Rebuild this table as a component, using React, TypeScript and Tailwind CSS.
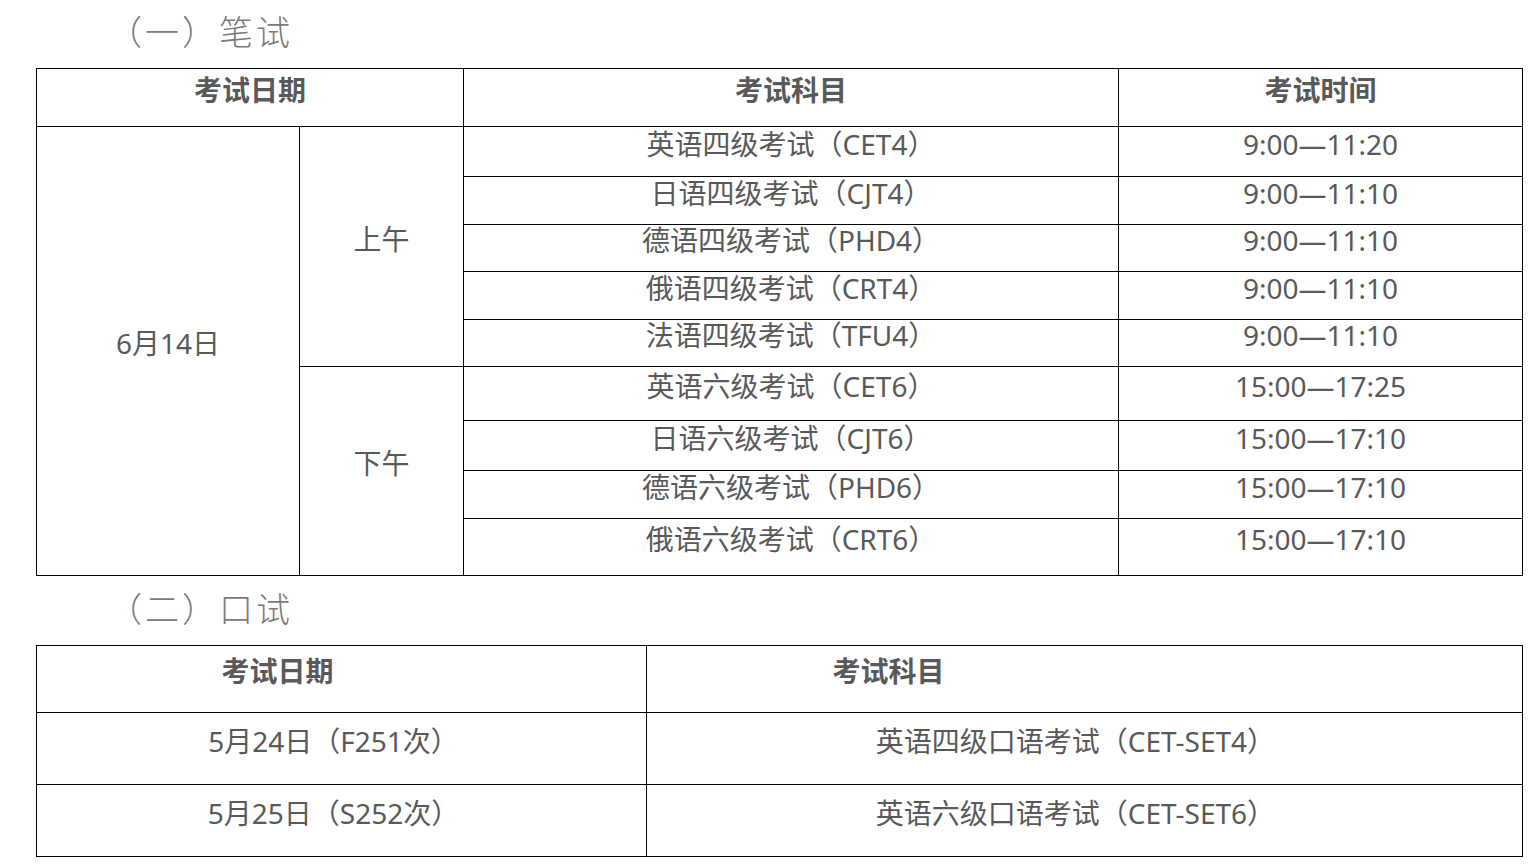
const font = { fontFamily: '"Noto Sans", "Noto Sans CJK SC", sans-serif' }

const morning = [
  ['英语四级考试（CET4）', '9:00—11:20', 'h-[50px]'],
  ['日语四级考试（CJT4）', '9:00—11:10', 'h-[48px]'],
  ['德语四级考试（PHD4）', '9:00—11:10', 'h-[47px]'],
  ['俄语四级考试（CRT4）', '9:00—11:10', 'h-[48px]'],
  ['法语四级考试（TFU4）', '9:00—11:10', 'h-[47px]'],
]

const afternoon = [
  ['英语六级考试（CET6）', '15:00—17:25', 'h-[54px]'],
  ['日语六级考试（CJT6）', '15:00—17:10', 'h-[50px]'],
  ['德语六级考试（PHD6）', '15:00—17:10', 'h-[48px]'],
  ['俄语六级考试（CRT6）', '15:00—17:10', 'h-[57px]'],
]

const cell = 'border border-black text-center align-middle p-0 pb-[16px] leading-[28px]'

function Heading({ children }: { children: string }) {
  return (
    <div className="pl-[108px] text-[34px] font-light leading-none tracking-[3px] text-[#7a7a7a]">{children}</div>
  )
}

export default function App() {
  return (
    <div className="min-h-[868px] bg-white text-[28px] text-[#595959]" style={font}>
      <div className="pt-[15px]">
        <Heading>（一）笔试</Heading>
      </div>

      <table className="ml-[36px] mt-[19px] w-[1486px] table-fixed border-collapse">
        <colgroup>
          <col className="w-[263px]" />
          <col className="w-[164px]" />
          <col className="w-[655px]" />
          <col className="w-[404px]" />
        </colgroup>
        <tbody>
          <tr className="h-[58px] font-bold">
            <td colSpan={2} className={cell}>考试日期</td>
            <td className={cell}>考试科目</td>
            <td className={cell}>考试时间</td>
          </tr>
          {morning.map(([subject, time, h], i) => (
            <tr key={subject} className={h}>
              {i === 0 && (
                <td rowSpan={9} className={cell}>6月14日</td>
              )}
              {i === 0 && (
                <td rowSpan={5} className={cell}>上午</td>
              )}
              <td className={cell}>{subject}</td>
              <td className={cell}>{time}</td>
            </tr>
          ))}
          {afternoon.map(([subject, time, h], i) => (
            <tr key={subject} className={h}>
              {i === 0 && (
                <td rowSpan={4} className={cell}>下午</td>
              )}
              <td className={cell}>{subject}</td>
              <td className={cell}>{time}</td>
            </tr>
          ))}
        </tbody>
      </table>

      <div className="pt-[16px]">
        <Heading>（二）口试</Heading>
      </div>

      <table className="ml-[36px] mt-[19px] w-[1486px] table-fixed border-collapse">
        <colgroup>
          <col className="w-[610px]" />
          <col className="w-[876px]" />
        </colgroup>
        <tbody>
          <tr className="h-[67px] font-bold">
            <td className={`${cell} pr-[128px]`}>考试日期</td>
            <td className={`${cell} pr-[392px]`}>考试科目</td>
          </tr>
          <tr className="h-[72px]">
            <td className={`${cell} pr-[16px]`}>5月24日（F251次）</td>
            <td className={`${cell} pr-[18px]`}>英语四级口语考试（CET-SET4）</td>
          </tr>
          <tr className="h-[72px]">
            <td className={`${cell} pr-[16px]`}>5月25日（S252次）</td>
            <td className={`${cell} pr-[18px]`}>英语六级口语考试（CET-SET6）</td>
          </tr>
        </tbody>
      </table>
    </div>
  )
}
